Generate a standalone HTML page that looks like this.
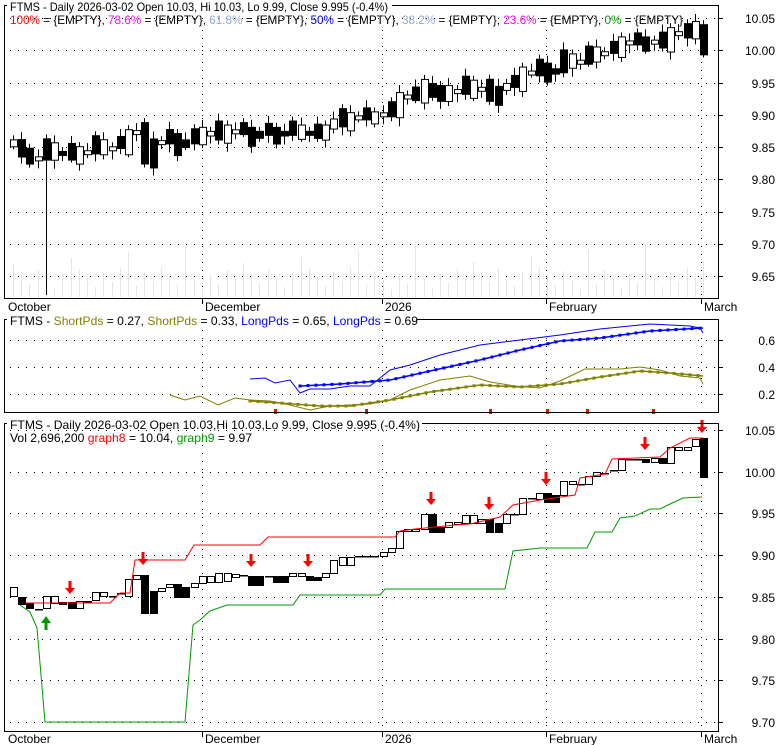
<!DOCTYPE html>
<html><head><meta charset="utf-8"><style>
html,body{margin:0;padding:0;background:#fff;}
svg{display:block;font-family:"Liberation Sans",sans-serif;font-size:12px;}
</style></head><body>
<svg id="s" width="780" height="745" xmlns="http://www.w3.org/2000/svg">
<rect x="0" y="0" width="780" height="745" fill="#fff"/>
<g id="g"></g>
<g fill="none" stroke="#000" stroke-width="1">
<rect x="4.5" y="5.5" width="714" height="293"/>
<rect x="4.5" y="319.5" width="714" height="93"/>
<rect x="4.5" y="423.5" width="714" height="308"/>
<line x1="202.5" y1="298" x2="202.5" y2="304"/><line x1="382.5" y1="298" x2="382.5" y2="304"/><line x1="546.5" y1="298" x2="546.5" y2="304"/><line x1="701.5" y1="298" x2="701.5" y2="304"/>
<line x1="202.5" y1="731" x2="202.5" y2="737"/><line x1="382.5" y1="731" x2="382.5" y2="737"/><line x1="546.5" y1="731" x2="546.5" y2="737"/><line x1="701.5" y1="731" x2="701.5" y2="737"/>
</g>
<g font-size="12" fill="#000">
<text x="8" y="311">October</text><text x="205" y="311">December</text><text x="385" y="311">2026</text><text x="549" y="311">February</text><text x="704" y="311">March</text>
<text x="8" y="743">October</text><text x="205" y="743">December</text><text x="385" y="743">2026</text><text x="549" y="743">February</text><text x="704" y="743">March</text>
</g>
<g font-size="12" fill="#000" text-anchor="end" id="axes"></g>
<rect x="7" y="0" width="385" height="12" fill="#fff"/>
<text x="10" y="11" textLength="378" lengthAdjust="spacingAndGlyphs">FTMS - Daily 2026-03-02 Open 10.03, Hi 10.03, Lo 9.99, Close 9.995 (-0.4%)</text>
<text x="10" y="24" textLength="673" lengthAdjust="spacingAndGlyphs"><tspan fill="#ff0000">100%</tspan> = {EMPTY}, <tspan fill="#ff00ff">78.6%</tspan> = {EMPTY}, <tspan fill="#8fa8d8">61.8%</tspan> = {EMPTY}, <tspan fill="#0000ff">50%</tspan> = {EMPTY}, <tspan fill="#8fa8d8">38.2%</tspan> = {EMPTY}, <tspan fill="#ff00ff">23.6%</tspan> = {EMPTY}, <tspan fill="#009900">0%</tspan> = {EMPTY}</text>
<rect x="7" y="314" width="410" height="12" fill="#fff"/>
<text x="10" y="325"  textLength="408" lengthAdjust="spacingAndGlyphs">FTMS - <tspan fill="#808000">ShortPds</tspan> = 0.27, <tspan fill="#808000">ShortPds</tspan> = 0.33, <tspan fill="#0000ff">LongPds</tspan> = 0.65, <tspan fill="#0000ff">LongPds</tspan> = 0.69</text>
<rect x="7" y="418" width="415" height="12" fill="#fff"/>
<text x="10" y="429" textLength="410" lengthAdjust="spacingAndGlyphs">FTMS - Daily 2026-03-02 Open 10.03,Hi 10.03,Lo 9.99, Close 9.995 (-0.4%)</text>
<text x="10" y="442" textLength="242" lengthAdjust="spacingAndGlyphs">Vol 2,696,200 <tspan fill="#ff0000">graph8</tspan> = 10.04, <tspan fill="#009900">graph9</tspan> = 9.97</text>
</svg>
<script>
var NS="http://www.w3.org/2000/svg",g=document.getElementById("g"),ax=document.getElementById("axes");
function el(t,a,p){var e=document.createElementNS(NS,t);for(var k in a)e.setAttribute(k,a[k]);(p||g).appendChild(e);return e;}
function dotsH(y,x0,x1){for(var x=x0;x<x1;x+=8)el("rect",{x:x,y:y,width:1,height:1,fill:"#000"});}
function dotsV(x,y0,y1){for(var y=y0;y<y1;y+=8)el("rect",{x:x,y:y,width:1,height:1,fill:"#000"});}
var p1=["10.05","10.00","9.95","9.90","9.85","9.80","9.75","9.70","9.65"];
for(var i=0;i<9;i++){var y=Math.round(18+i*32.25);dotsH(y,10,716);el("line",{x1:719,y1:y+.5,x2:723,y2:y+.5,stroke:"#000"});var t=el("text",{x:775,y:y+5},ax);t.textContent=p1[i];}
var p3=["10.05","10.00","9.95","9.90","9.85","9.80","9.75","9.70"];
for(var i=0;i<8;i++){var y=Math.round(430+i*41.7);dotsH(y,10,716);el("line",{x1:719,y1:y+.5,x2:723,y2:y+.5,stroke:"#000"});var t=el("text",{x:775,y:y+5},ax);t.textContent=p3[i];}
[["0.6",340],["0.4",367],["0.2",394]].forEach(function(a){dotsH(a[1],10,716);el("line",{x1:719,y1:a[1]+.5,x2:723,y2:a[1]+.5,stroke:"#000"});var t=el("text",{x:775,y:a[1]+5},ax);t.textContent=a[0];});
[202,382,546,701].forEach(function(x){dotsV(x,30,296);dotsV(x,445,729);dotsV(x,330,410);});
var d=[[587,596,0],[597,604,1],[603,608,1],[609,609,2],[596,608,0],[596,603,0],[602,604,1],[602,608,1],[601,608,0],[601,601,2],[592,600,0],[592,596,0],[596,596,2],[593,593,2],[579,596,0],[575,579,0],[575,613,1],[591,613,1],[588,591,0],[584,587,0],[584,597,1],[587,597,1],[583,587,0],[576,583,0],[576,582,0],[573,582,0],[573,581,0],[574,577,0],[575,575,2],[576,585,1],[576,585,1],[576,576,2],[576,582,1],[576,582,1],[573,576,0],[573,576,0],[576,580,1],[577,580,1],[573,577,0],[560,573,0],[557,565,0],[557,565,0],[556,556,2],[556,556,2],[556,556,2],[552,556,0],[548,552,0],[531,548,0],[529,531,0],[529,531,0],[514,529,0],[514,532,1],[527,532,1],[522,527,0],[522,523,0],[515,523,0],[515,523,0],[519,523,0],[519,532,1],[523,532,1],[514,523,0],[514,514,2],[498,514,0],[498,498,2],[493,499,0],[493,502,1],[495,502,1],[481,495,0],[481,484,0],[484,484,2],[476,484,0],[472,476,0],[473,473,2],[470,470,2],[459,470,0],[459,459,2],[459,459,2],[459,462,1],[458,462,0],[458,463,1],[447,463,0],[447,450,0],[447,450,0],[439,446,0],[438,477,1]];
var n=d.length,st=(703-13)/(n-1);
for(var i=0;i<n;i++){var x=Math.round(13+i*st),h=8+((i*37)%23)+(i%7==0?25:0);el("rect",{x:x,y:297-h,width:1,height:h,fill:"#e4e4e4"});}
for(var i=0;i<n;i++){
 var x=Math.round(13+i*st),a=d[i];
 if(a[2]==2) el("rect",{x:x-3,y:a[0],width:8,height:1.5,fill:"#000"});
 else el("rect",{x:x-3+.5,y:a[0]+.5,width:7,height:Math.max(a[1]-a[0],2),fill:a[2]?"#000":"#fff",stroke:"#000"});
 var t=18+(a[0]-430)*0.773-4*((i*5)%3),b=18+(a[1]-430)*0.773+4*((i*7)%3);
 if(b-t<4)b=t+4;
 var wt=t-4-((i*3)%6),wb=b+3+((i*11)%7);
 if(i==4)wb=295;
 el("line",{x1:x+.5,y1:wt,x2:x+.5,y2:wb,stroke:"#000"});
 var f=(i%3==1||a[2]==1)?1:0;
 el("rect",{x:x-3+.5,y:t+.5,width:7,height:b-t,fill:f?"#000":"#fff",stroke:"#000"});
}
function pl(pts,c,w){el("polyline",{points:pts.map(function(p){return p.join(",")}).join(" "),fill:"none",stroke:c,"stroke-width":w||1});}
pl([[25,603],[110,603],[120,593],[130,593],[135,560],[185,560],[194,545],[260,545],[268,537],[395,537],[400,531],[415,529],[455,525],[470,524],[500,517],[513,505],[540,500],[575,495],[580,478],[605,474],[612,459],[660,457],[670,448],[690,438],[703,438]],"#ff0000");
pl([[20,605],[30,612],[37,628],[45,722],[185,722],[193,625],[200,620],[210,611],[227,605],[293,605],[300,595],[380,595],[385,589],[505,589],[513,551],[540,548],[587,548],[595,532],[612,532],[620,518],[635,516],[650,509],[660,509],[670,504],[683,498],[702,497]],"#009900");
function arr(x,y,c,up){if(up){el("polygon",{points:(x-5)+","+(y+7)+" "+(x+5)+","+(y+7)+" "+x+","+y,fill:c});el("rect",{x:x-1.5,y:y+6,width:3,height:8,fill:c});}
else{el("rect",{x:x-1.5,y:y,width:3,height:8,fill:c});el("polygon",{points:(x-5)+","+(y+7)+" "+(x+5)+","+(y+7)+" "+x+","+(y+13),fill:c});}}
[[70,581],[143,552],[251,554],[308,554],[431,492],[489,497],[546,472],[645,437],[702,420]].forEach(function(a){arr(a[0],a[1],"#ff0000",0);});
arr(46,616,"#009900",1);
[275,366,490,547,587,653].forEach(function(x){el("rect",{x:x-1,y:409,width:3,height:5,fill:"#ff0000"});});
pl([[250,379],[265,378],[275,383],[290,380],[300,393],[310,389],[330,389],[350,386],[370,386],[390,370],[410,365],[440,355],[480,345],[520,340],[560,335],[600,329],[650,324],[690,326],[700,328],[703,333]],"#0000ff");
var bm=[[300,386],[340,384],[390,380],[430,371],[480,360],[520,350],[560,341],[600,338],[650,331],[703,328]];
pl(bm,"#0000ff",1.5);
for(var x=300;x<=703;x+=8){var y=interp(bm,x);el("rect",{x:x-1.5,y:y-1.5,width:3,height:3,fill:"#0000ff"});}
pl([[170,395],[185,400],[200,396],[218,405],[235,398],[250,400],[270,401],[290,405],[310,410],[330,406],[350,405],[370,404],[390,400],[410,390],[440,380],[470,376],[490,382],[515,386],[540,388],[560,381],[585,369],[620,369],[640,367],[660,370],[680,376],[700,378],[703,384]],"#808000");
var om=[[250,401],[280,403],[320,406],[350,406],[390,400],[430,392],[480,385],[520,387],[560,384],[600,377],[640,371],[670,373],[703,376]];
pl(om,"#808000",1.5);
for(var x=250;x<=703;x+=8){var y=interp(om,x);el("rect",{x:x-1.5,y:y-1.5,width:3,height:3,fill:"#808000"});}
function interp(p,x){for(var i=0;i<p.length-1;i++){if(x>=p[i][0]&&x<=p[i+1][0]){var f=(x-p[i][0])/(p[i+1][0]-p[i][0]);return p[i][1]+f*(p[i+1][1]-p[i][1]);}}return p[p.length-1][1];}
</script>
</body></html>
